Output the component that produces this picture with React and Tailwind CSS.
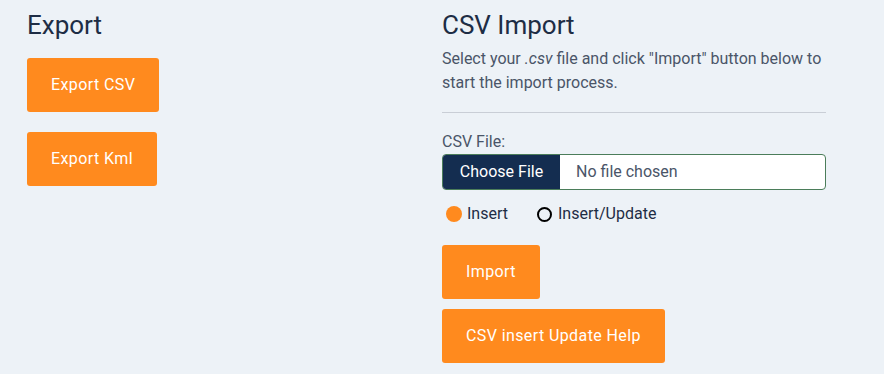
import { useState } from 'react';

const orangeBtn = 'bg-[#ff8a1e] text-white rounded-[3px] h-[54px] px-6 text-[16px] tracking-[0.4px] w-fit';

const App = () => {
    const [mode, setMode] = useState('insert');

    return (
        <div className="min-h-[374px] bg-[#edf2f7] font-['Roboto',sans-serif] text-[#1e2d45]">
            <div className="grid grid-cols-2 px-[27px] pt-[7px]">
                {/* Export */}
                <div className="flex flex-col">
                    <h2 className="text-[26px] leading-[36px] mb-[15px]">Export</h2>
                    <button className={orangeBtn}>Export CSV</button>
                    <button className={`${orangeBtn} mt-[20px]`}>Export Kml</button>
                </div>

                {/* CSV Import */}
                <div className="flex flex-col pr-[31px]">
                    <h2 className="text-[26px] leading-[36px] mb-[4px]">CSV Import</h2>
                    <p className="text-[16px] leading-[24px] text-[#4a5568]">
                        Select your <em>.csv</em> file and click "Import" button below to start the import process.
                    </p>
                    <hr className="border-0 border-t border-[#c9ced6] mt-[17px] mb-[18px]" />
                    <label className="text-[16px] leading-[22px] text-[#4a5568] mb-[1px]">CSV File:</label>
                    <div className="flex h-[36px] rounded-[4px] border border-[#4b7d5a] overflow-hidden bg-white">
                        <span className="bg-[#142d50] text-white text-[16px] flex items-center justify-center w-[117px]">Choose File</span>
                        <span className="flex items-center pl-[16px] text-[16px] text-[#4a5568]">No file chosen</span>
                    </div>
                    <div className="flex items-center gap-[29px] mt-[12px] ml-[4px] text-[16px]">
                        <label className="flex items-center gap-[5px] cursor-pointer" onClick={() => setMode('insert')}>
                            <span className={mode === 'insert' ? 'w-[16px] h-[16px] rounded-full bg-[#ff8a1e]' : 'w-[15px] h-[15px] rounded-full border-2 border-black'} />
                            Insert
                        </label>
                        <label className="flex items-center gap-[6px] cursor-pointer" onClick={() => setMode('update')}>
                            <span className={mode === 'update' ? 'w-[16px] h-[16px] rounded-full bg-[#ff8a1e]' : 'w-[15px] h-[15px] rounded-full border-2 border-black'} />
                            Insert/Update
                        </label>
                    </div>
                    <button className={`${orangeBtn} mt-[19px]`}>Import</button>
                    <button className={`${orangeBtn} mt-[10px]`}>CSV insert Update Help</button>
                </div>
            </div>
        </div>
    );
};

export default App;
